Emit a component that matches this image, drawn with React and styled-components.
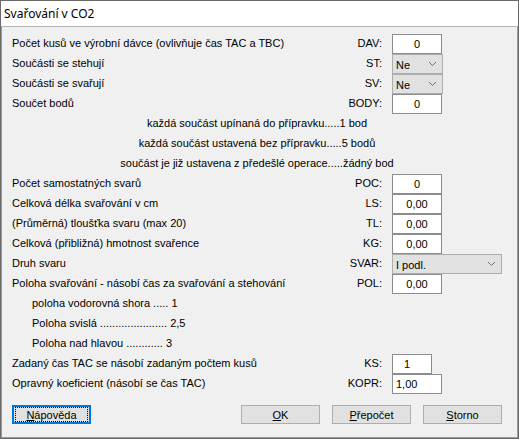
import React from 'react'
import styled, { createGlobalStyle } from 'styled-components';

const GlobalStyle = createGlobalStyle`
    html, body {
        margin: 0;
        padding: 0;
        background: #ffffff;
    }
    body {
        font-family: "Liberation Sans", Arial, sans-serif;
        font-size: 11px;
        color: #000;
    }
`

function Chevron() {
    return (
        <svg width="9" height="6" viewBox="0 0 9 6">
            <path d="M1 1 L4.5 4.5 L8 1" fill="none" stroke="#707070" strokeWidth="1" />
        </svg>
    )
}

function Field({ code, children, desc, indent }) {
    return (
        <Row>
            <Desc $indent={indent}>{desc}</Desc>
            <Code>{code}</Code>
            <Cell>{children}</Cell>
        </Row>
    )
}

function App() {
    return (
        <Window>
            <GlobalStyle />
            <TitleBar>Svařování v CO2</TitleBar>
            <Body>
                <Field desc="Počet kusů ve výrobní dávce (ovlivňuje čas TAC a TBC)" code="DAV:">
                    <Input readOnly value="0" />
                </Field>
                <Field desc="Součásti se stehují" code="ST:">
                    <Combo $w={51}>Ne<Chevron /></Combo>
                </Field>
                <Field desc="Součásti se svařují" code="SV:">
                    <Combo $w={51}>Ne<Chevron /></Combo>
                </Field>
                <Field desc="Součet bodů" code="BODY:">
                    <Input readOnly value="0" />
                </Field>
                <Note>každá součást upínaná do přípravku.....1 bod</Note>
                <Note>každá součást ustavená bez přípravku.....5 bodů</Note>
                <Note>součást je již ustavena z předešlé operace.....žádný bod</Note>
                <Field desc="Počet samostatných svarů" code="POC:">
                    <Input readOnly value="0" />
                </Field>
                <Field desc="Celková délka svařování v cm" code="LS:">
                    <Input readOnly value="0,00" />
                </Field>
                <Field desc="(Průměrná) tloušťka svaru (max 20)" code="TL:">
                    <Input readOnly value="0,00" />
                </Field>
                <Field desc="Celková (přibližná) hmotnost svařence" code="KG:">
                    <Input readOnly value="0,00" />
                </Field>
                <Field desc="Druh svaru" code="SVAR:">
                    <Combo $w={110}>I podl.<Chevron /></Combo>
                </Field>
                <Field desc="Poloha svařování - násobí čas za svařování a stehování" code="POL:">
                    <Input readOnly value="0,00" />
                </Field>
                <Field desc="poloha vodorovná shora ..... 1" indent />
                <Field desc="Poloha svislá ...................... 2,5" indent />
                <Field desc="Poloha nad hlavou ............ 3" indent />
                <Field desc="Zadaný čas TAC se násobí zadaným počtem kusů" code="KS:">
                    <Input readOnly value="1" $w={40} $align="left" $pad={11} />
                </Field>
                <Field desc="Opravný koeficient (násobí se čas TAC)" code="KOPR:">
                    <Input readOnly value="1,00" $align="left" $pad={3} />
                </Field>
                <Footer>
                    <Button $focused><Focus><u>N</u>ápověda</Focus></Button>
                    <ButtonGroup>
                        <Button><u>O</u>K</Button>
                        <Button><u>P</u>řepočet</Button>
                        <Button><u>S</u>torno</Button>
                    </ButtonGroup>
                </Footer>
            </Body>
        </Window>
    )
}

export default App

const Window = styled.div`
    width: 519px;
    height: 439px;
    box-sizing: border-box;
    border: 1px solid #6a6a6a;
    box-shadow: inset 1px 0 0 #9a9a9a, inset -1px 0 0 #9a9a9a, inset 0 -1px 0 #9a9a9a;
    background: #f0f0f0;
    display: flex;
    flex-direction: column;
    overflow: hidden;
`

const TitleBar = styled.div`
    height: 25px;
    background: #ffffff;
    border-bottom: 1px solid #b4b4b4;
    padding-left: 3px;
    display: flex;
    align-items: center;
    font-family: "Noto Sans", "Liberation Sans", sans-serif;
    font-size: 12px;
    color: #000;
`

const Body = styled.div`
    padding: 7px 16px 0 11px;
    display: flex;
    flex-direction: column;
`

const Row = styled.div`
    display: grid;
    grid-template-columns: 1fr 70px 110px;
    column-gap: 10px;
    height: 20px;
`

const Desc = styled.div`
    padding-left: ${p => (p.$indent ? '20px' : '0')};
    line-height: 18px;
    white-space: nowrap;
`

const Code = styled.div`
    text-align: right;
    line-height: 18px;
    white-space: nowrap;
`

const Cell = styled.div`
    display: flex;
    align-items: flex-start;
`

const Note = styled.div`
    height: 20px;
    line-height: 18px;
    text-align: center;
    white-space: nowrap;
`

const Input = styled.input`
    width: ${p => p.$w || 50}px;
    height: 20px;
    box-sizing: border-box;
    margin: 0;
    padding: 0 0 0 ${p => p.$pad || 0}px;
    border: 1px solid #8c8c8c;
    background: #ffffff;
    font-family: "Liberation Sans", Arial, sans-serif;
    font-size: 11px;
    color: #000;
    text-align: ${p => p.$align || 'center'};
    outline: none;
`

const Combo = styled.div`
    width: ${p => p.$w}px;
    height: 20px;
    box-sizing: border-box;
    border: 1px solid #adadad;
    background: #e1e1e1;
    display: flex;
    align-items: center;
    justify-content: space-between;
    padding: 2px 5px 0 3px;
    svg {
        margin-top: -2px;
    }
`

const Footer = styled.div`
    margin-top: 11px;
    display: flex;
    justify-content: space-between;
    align-items: center;
`

const ButtonGroup = styled.div`
    display: flex;
    gap: 12px;
`

const Button = styled.button`
    width: 79px;
    height: 19px;
    box-sizing: border-box;
    margin: 0;
    padding: 0;
    background: #e1e1e1;
    border: 1px solid ${p => (p.$focused ? '#0078d7' : '#adadad')};
    box-shadow: ${p => (p.$focused ? 'inset 0 0 0 1px #0078d7' : 'none')};
    font-family: "Liberation Sans", Arial, sans-serif;
    font-size: 11px;
    color: #000;
    display: flex;
    align-items: center;
    justify-content: center;
    u {
        text-decoration: underline;
        text-underline-offset: 1px;
    }
`

const Focus = styled.span`
    display: flex;
    align-items: center;
    justify-content: center;
    width: 71px;
    height: 13px;
    outline: 1px dotted #000;
`
